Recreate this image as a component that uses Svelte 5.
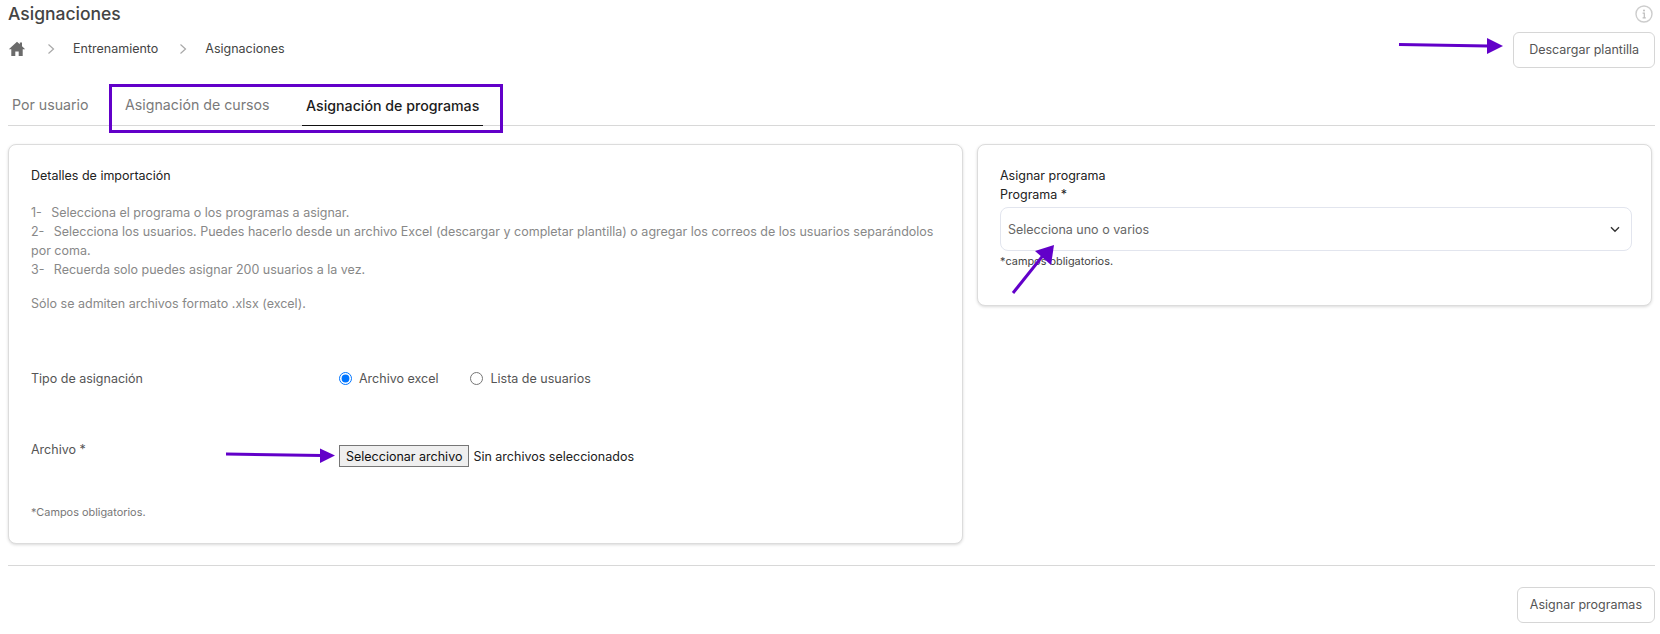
<script>
    const tabs = [
        { label: "Por usuario", active: false },
        { label: "Asignación de cursos", active: false },
        { label: "Asignación de programas", active: true },
    ];

    const steps = [
        "Selecciona el programa o los programas a asignar.",
        "Selecciona los usuarios. Puedes hacerlo desde un archivo Excel (descargar y completar plantilla) o agregar los correos de los usuarios separándolos por coma.",
        "Recuerda solo puedes asignar 200 usuarios a la vez.",
    ];

    let tipo = "excel";
</script>

<div class="page">
    <header class="top">
        <div class="title-row">
            <h1>Asignaciones</h1>
            <svg class="info" width="18" height="18" viewBox="0 0 18 18" fill="none">
                <circle cx="9" cy="9" r="8" stroke="#cdcdcd" stroke-width="1.4" />
                <circle cx="9" cy="5.6" r="1" fill="#bdbdbd" />
                <path d="M7.6 8.2h1.7v4.4M7.6 12.8h3.2" stroke="#bdbdbd" stroke-width="1.2" />
            </svg>
        </div>
        <div class="crumb-row">
            <nav class="crumbs">
                <svg class="home" width="18" height="16" viewBox="0 0 18 16">
                    <path d="M9 .8 .8 8.2h2.5V15h4v-4.6h3.4V15h4V8.2h2.5L14 5.2V1.6h-2.2v1.6z" fill="#6b6b6b" />
                </svg>
                <svg class="sep" width="8" height="12" viewBox="0 0 8 12" fill="none">
                    <path d="m1.5 1.5 5 4.5-5 4.5" stroke="#a8a8a8" stroke-width="1.2" />
                </svg>
                <span>Entrenamiento</span>
                <svg class="sep" width="8" height="12" viewBox="0 0 8 12" fill="none">
                    <path d="m1.5 1.5 5 4.5-5 4.5" stroke="#a8a8a8" stroke-width="1.2" />
                </svg>
                <span>Asignaciones</span>
            </nav>
            <button class="btn download">Descargar plantilla</button>
        </div>
    </header>

    <div class="tabs">
        {#each tabs as tab}
            <div class="tab" class:active={tab.active}>{tab.label}</div>
        {/each}
    </div>

    <main class="cards">
        <section class="card detail">
            <h2>Detalles de importación</h2>
            <ol class="steps">
                {#each steps as step, i}
                    <li>{i + 1}-&nbsp;&thinsp; {step}</li>
                {/each}
            </ol>
            <p class="formats">Sólo se admiten archivos formato .xlsx (excel).</p>

            <div class="field tipo">
                <div class="field-label">Tipo de asignación</div>
                <div class="radios">
                    <label><input type="radio" name="tipo" value="excel" bind:group={tipo} />Archivo excel</label>
                    <label><input type="radio" name="tipo" value="lista" bind:group={tipo} />Lista de usuarios</label>
                </div>
            </div>

            <div class="field archivo">
                <div class="field-label">Archivo *</div>
                <div class="file">
                    <button class="file-btn">Seleccionar archivo</button>
                    <span>Sin archivos seleccionados</span>
                </div>
            </div>

            <p class="required">*Campos obligatorios.</p>
        </section>

        <section class="card assign">
            <h3>Asignar programa</h3>
            <div class="select-label">Programa *</div>
            <div class="select">
                <span>Selecciona uno o varios</span>
                <svg width="10" height="7" viewBox="0 0 10 7" fill="none">
                    <path d="m1 1.2 4 4 4-4" stroke="#333" stroke-width="1.4" />
                </svg>
            </div>
            <p class="hint">*campos obligatorios.</p>
        </section>
    </main>

    <footer class="actions">
        <button class="btn submit">Asignar programas</button>
    </footer>

    <!-- anotaciones sobre la captura -->
    <div class="highlight"></div>
    <svg class="marks" width="1660" height="634" viewBox="0 0 1660 634" fill="#6200c9">
        <path d="M1399 44.5 1488 46" stroke="#6200c9" stroke-width="3" />
        <path d="M1487 38 1503 46 1487 54z" />
        <path d="M226 454 322 455.5" stroke="#6200c9" stroke-width="3" />
        <path d="M320 448.5 335 455.5 320 463z" />
        <path d="M1013 293 1045 253" stroke="#6200c9" stroke-width="3" />
        <path d="M1035 251 1054 245 1051 265z" />
    </svg>
</div>

<style>
    :global(body) {
        margin: 0;
        background: #fff;
    }

    .page {
        position: relative;
        width: 1660px;
        height: 634px;
        overflow: hidden;
        box-sizing: border-box;
        padding: 0 5px 0 8px;
        font-family: Inter, "Liberation Sans", sans-serif;
        font-size: 13px;
        color: #333;
    }

    .title-row {
        display: flex;
        justify-content: space-between;
        align-items: center;
        height: 27px;
    }

    h1 {
        margin: 0;
        font-size: 17.5px;
        font-weight: 500;
        color: #444;
    }

    .info {
        margin-right: 2px;
    }

    .crumb-row {
        display: flex;
        justify-content: space-between;
        align-items: center;
        margin-top: 5px;
    }

    .crumbs {
        display: flex;
        align-items: center;
        margin-bottom: 3px;
        font-size: 12.5px;
        color: #444;
    }

    .home {
        margin-right: 21px;
    }

    .sep {
        margin-right: 18px;
    }

    .crumbs span + .sep {
        margin-left: 21px;
    }

    .btn {
        height: 36px;
        background: #fff;
        border: 1px solid #d6d6d6;
        border-radius: 6px;
        font-family: inherit;
        font-size: 12.5px;
        color: #555;
    }

    .download {
        padding: 0 15px 1px;
    }

    .submit {
        padding: 0 12px 1px;
    }

    .tabs {
        display: flex;
        height: 58px;
        align-items: flex-end;
        border-bottom: 1px solid #d8d8d8;
        box-sizing: border-box;
    }

    .tab {
        height: 42px;
        box-sizing: border-box;
        padding: 13px 4px 0;
        margin-right: 28.5px;
        font-size: 14.2px;
        color: #7a7a7a;
    }

    .tab.active {
        color: #1c1c1c;
        font-weight: 500;
        margin-bottom: -1px;
        border-bottom: 1px solid #111;
    }

    .cards {
        display: flex;
        align-items: flex-start;
        gap: 14px;
        margin-top: 18px;
        padding-right: 3px;
    }

    .card {
        box-sizing: border-box;
        background: #fff;
        border: 1px solid #dcdcdc;
        border-radius: 8px;
        box-shadow: 0 1px 3px rgba(0, 0, 0, 0.15);
    }

    .detail {
        width: 955px;
        height: 400px;
        padding: 22px 22px 0;
    }

    h2 {
        margin: 0;
        font-size: 12.5px;
        font-weight: 400;
        line-height: 18px;
        color: #222;
    }

    .steps {
        list-style: none;
        margin: 18px 0 0;
        padding: 0;
        font-size: 12.5px;
        line-height: 19px;
        color: #888;
    }

    .formats {
        margin: 15px 0 0;
        font-size: 12.5px;
        line-height: 19px;
        color: #888;
    }

    .field {
        display: flex;
    }

    .field-label {
        width: 308px;
        font-size: 12.5px;
        color: #555;
    }

    .tipo {
        margin-top: 58px;
        align-items: center;
    }

    .radios {
        display: flex;
        gap: 32px;
        font-size: 12.5px;
        color: #555;
    }

    .radios label {
        display: flex;
        align-items: center;
    }

    .radios input {
        margin: 0 7px 0 0;
        width: 13px;
        height: 13px;
    }

    .archivo {
        margin-top: 56px;
    }

    .file {
        display: flex;
        align-items: center;
        margin-top: 3px;
        font-size: 12.5px;
        color: #222;
    }

    .file-btn {
        height: 22px;
        padding: 0 6px;
        margin-right: 4px;
        background: #efefef;
        border: 1px solid #767676;
        border-radius: 0;
        font-family: inherit;
        font-size: 12.5px;
        color: #111;
    }

    .required {
        margin: 38px 0 0;
        font-size: 10.9px;
        color: #777;
    }

    .assign {
        width: 675px;
        height: 162px;
        padding: 22px 19px 0 22px;
    }

    h3 {
        margin: 0;
        font-size: 12.5px;
        font-weight: 400;
        line-height: 18px;
        color: #222;
    }

    .select-label {
        font-size: 12.5px;
        line-height: 20px;
        color: #222;
    }

    .select {
        display: flex;
        justify-content: space-between;
        align-items: center;
        height: 44px;
        margin-top: 2px;
        padding: 0 11px 0 7px;
        box-sizing: border-box;
        border: 1px solid #e2e5ee;
        border-radius: 8px;
        font-size: 12.5px;
        color: #666;
    }

    .hint {
        margin: 3px 0 0;
        font-size: 10.9px;
        color: #444;
    }

    .actions {
        display: flex;
        justify-content: flex-end;
        margin-top: 21px;
        padding-top: 21px;
        border-top: 1px solid #d8d8d8;
    }

    .highlight {
        position: absolute;
        left: 109px;
        top: 84px;
        width: 394px;
        height: 49px;
        box-sizing: border-box;
        border: 3px solid #6200c9;
    }

    .marks {
        position: absolute;
        left: 0;
        top: 0;
        pointer-events: none;
    }
</style>
